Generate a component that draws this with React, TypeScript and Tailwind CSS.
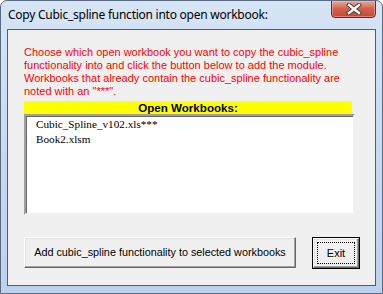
import React from "react";

const btn3d =
  "border border-t-white border-l-white border-r-[#696969] border-b-[#696969] shadow-[inset_-1px_-1px_0_#a0a0a0,inset_1px_1px_0_#e3e3e3] bg-[#f0f0f0]";

export default function App() {
  return (
    <div className="w-[383px] h-[294px] bg-white">
      <div className="relative w-[383px] h-[294px] rounded-t-[7px] border border-[#5a6b80] bg-gradient-to-b from-[#d6e5f6] via-[#c6daf1] to-[#bcd2ec] flex flex-col overflow-hidden">
        {/* title bar */}
        <div className="h-[28px] shrink-0 pl-[7px] pt-[6px] text-[12px] leading-[16px] text-black [font-family:'Noto_Sans',sans-serif] tracking-[-0.25px]">
          Copy Cubic_spline function into open workbook:
        </div>
        <div className="absolute top-[-1px] right-[6px] w-[45px] h-[18px] rounded-b-[4px] border border-[#6b2a20] bg-gradient-to-b from-[#e9a898] via-[#d0604a] to-[#c84630] flex items-center justify-center shadow-[inset_0_0_0_1px_rgba(255,200,190,0.45)]">
          <svg width="16" height="12" viewBox="0 0 16 12">
            <path d="M3 2 L13 10 M13 2 L3 10" stroke="#4a3a38" strokeWidth="4.2" strokeLinecap="square" />
            <path d="M3 2 L13 10 M13 2 L3 10" stroke="#ffffff" strokeWidth="2.4" strokeLinecap="square" />
          </svg>
        </div>
        {/* client area */}
        <div className="mx-[6px] h-[257px] shrink-0 border border-[#4f5d6e] bg-[#f0f0f0] flex flex-col [font-family:'Liberation_Sans',Arial,sans-serif]">
          <div className="pl-[16px] pr-[20px] pt-[16px] text-[11px] leading-[13px] text-[#ff0000]">
            <div>Choose which open workbook you want to copy the cubic_spline</div>
            <div>functionality into and click the button below to add the module.</div>
            <div>Workbooks that already contain the cubic_spline functionality are</div>
            <div>noted with an "***".</div>
          </div>
          <div className="ml-[16px] mt-[3px] w-[328px] h-[13px] bg-[#ffff00] text-[11.6px] leading-[13px] font-bold text-black text-center">
            Open Workbooks:
          </div>
          <div className="ml-[16px] w-[331px] h-[101px] bg-white border-2 border-t-[#a0a0a0] border-l-[#a0a0a0] border-r-[#f0f0f0] border-b-[#f0f0f0] shadow-[inset_1px_1px_0_#696969] pl-[10px] pt-[1px] [font-family:'Liberation_Serif','Times_New_Roman',serif] text-[11.2px] leading-[15px] text-black">
            <div>Cubic_Spline_v102.xls***</div>
            <div>Book2.xlsm</div>
          </div>
          <div className="flex items-start pl-[16px] mt-[22px]">
            <div className={`w-[272px] h-[31px] flex items-center justify-center text-[10.8px] text-black ${btn3d}`}>
              Add cubic_spline functionality to selected workbooks
            </div>
            <div className="ml-[16px] w-[48px] h-[32px] border border-black p-0">
              <div className={`w-full h-full flex items-center justify-center p-[3px] ${btn3d}`}>
                <div className="w-full h-full border border-dotted border-black flex items-center justify-center text-[11px] text-black">
                  Exit
                </div>
              </div>
            </div>
          </div>
        </div>
      </div>
    </div>
  );
}
